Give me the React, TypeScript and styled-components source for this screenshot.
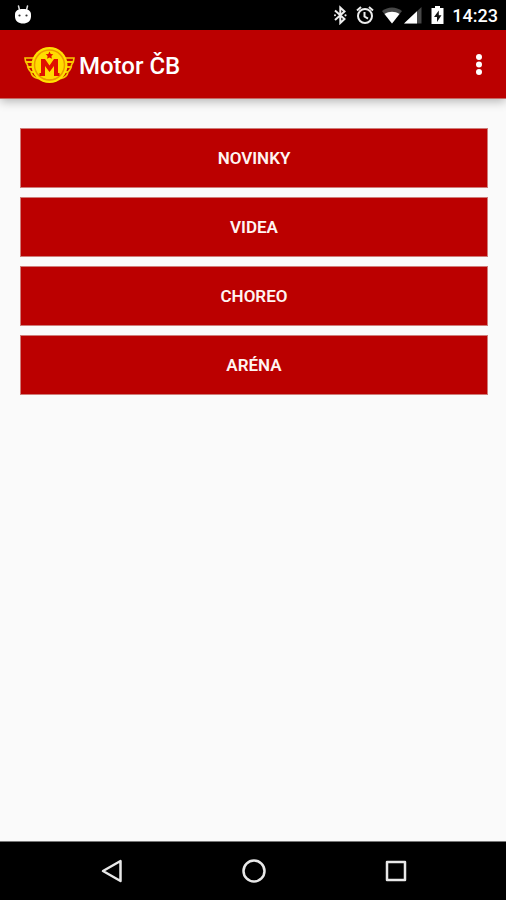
import React from "react";
import styled, { createGlobalStyle } from "styled-components";

const GlobalStyle = createGlobalStyle`
  * { box-sizing: border-box; }
  body {
    margin: 0;
    background: #fafafa;
    font-family: Roboto, "Noto Sans", sans-serif;
  }
`;

const Screen = styled.div`
  display: flex;
  flex-direction: column;
  min-height: 100vh;
  background: #fafafa;
`;

const StatusBar = styled.div`
  display: flex;
  align-items: center;
  justify-content: space-between;
  height: 30px;
  padding: 0 8px 0 14px;
  background: #000;
  color: #fff;
`;

const StatusGroup = styled.div<{ $gap: number }>`
  display: flex;
  align-items: center;
  gap: ${({ $gap }) => $gap}px;
`;

const Clock = styled.time`
  padding-top: 2px;
  font-size: 18px;
  font-weight: 500;
  line-height: 24px;
`;

const Glyph = styled.svg`
  display: block;
  flex: none;
`;

const AppBar = styled.header`
  display: flex;
  align-items: center;
  height: 69px;
  padding: 2px 10px 0 24px;
  background: #bb0000;
  color: #fff;
  border-bottom: 1px solid #c46a66;
  box-shadow: 0 2px 10px rgba(0, 0, 0, 0.3);
`;

const Title = styled.h1`
  flex: 1;
  margin: 0;
  padding: 2px 0 0 3px;
  font-size: 24px;
  font-weight: 500;
  line-height: 32px;
`;

const IconButton = styled.button`
  display: flex;
  align-items: center;
  justify-content: center;
  height: 48px;
  min-width: 34px;
  padding: 0;
  border: 0;
  background: none;
  color: inherit;
  cursor: pointer;
`;

const Menu = styled.main`
  flex: 1;
  display: flex;
  flex-direction: column;
  gap: 9px;
  padding: 29px 18px 28px 20px;
`;

const MenuButton = styled.button`
  height: 60px;
  padding: 0;
  border: 1px solid #cf7d7a;
  background: #bb0000;
  color: #fff4f2;
  font-family: inherit;
  font-size: 17px;
  font-weight: 600;
  line-height: 24px;
  cursor: pointer;
`;

const NavBar = styled.nav`
  display: grid;
  grid-template-columns: repeat(3, 1fr);
  align-items: center;
  height: 59px;
  padding: 0 39px 0 41px;
  border-top: 1px solid #777;
  background: #000;
  color: #e8e8e8;
`;

const AndroidHead = () => (
  <Glyph width="18" height="20" viewBox="0 0 18 20">
    <path d="M4.500 1 5.500 5M13.500 1 12.500 5" stroke="#ddd" strokeWidth="1.500" strokeLinecap="round" />
    <path d="M1 9.500C1 5.800 4 4 9 4s8 1.800 8 5.500v2C17 16 13.500 18.500 9 18.500S1 16 1 11.500Z" fill="#fff" />
    <circle cx="5.500" cy="10.500" r="1.100" fill="#333" />
    <circle cx="12.500" cy="10.500" r="1.100" fill="#333" />
  </Glyph>
);

const BluetoothIcon = () => (
  <Glyph width="14" height="20" viewBox="0 0 14 20" fill="none" stroke="#eee" strokeWidth="2">
    <path d="M1 5.500 10.500 14 6.300 18V2.500L10.500 6.500 1 15" />
    <circle cx="1" cy="10.300" r="1" fill="#eee" stroke="none" />
    <circle cx="11.500" cy="10.300" r="1.100" fill="#eee" stroke="none" />
  </Glyph>
);

const AlarmIcon = () => (
  <Glyph width="18" height="20" viewBox="0 0 18 20" fill="none" stroke="#eee" strokeWidth="2">
    <circle cx="9" cy="11" r="7" />
    <path d="M1 5.500 5 2M17 5.500 13 2M8.500 7v4.500l3.500 2.200" />
  </Glyph>
);

const WifiIcon = () => (
  <Glyph width="20" height="20" viewBox="0 0 20 20">
    <path d="M0 6C6 1.300 14 1.300 20 6L10 18.500Z" fill="#484848" />
    <path d="M2.500 9C7 6 13 6 17.500 9L10 18.500Z" fill="#fff" />
  </Glyph>
);

const SignalIcon = () => (
  <Glyph width="18" height="20" viewBox="0 0 18 20">
    <path d="M0 18.500 17.500 2v16.500Z" fill="#484848" />
    <path d="M0 18.500 13 6.200v12.300Z" fill="#fff" />
  </Glyph>
);

const BatteryIcon = () => (
  <Glyph width="14" height="20" viewBox="0 0 14 20">
    <path d="M5 1h5v2h3.500v16h-12V3H5Z" fill="#fff" />
    <path d="M8.800 5.500 4 12h3v5l4.500-6.800H8.800Z" fill="#111" />
  </Glyph>
);

const Wing = () => (
  <>
    <path d="M1 12H14V32.500C10 31.500 7.500 29 7 26 5 24 3.500 21.500 3.500 19 2 17 1 14.500 1 12Z" fill="#c40800" stroke="#f8c800" strokeWidth="1.600" />
    <path d="M2 16H12M4 21H12M7 26H13" stroke="#f8c800" strokeWidth="2.200" />
  </>
);

const Logo = () => (
  <Glyph width="52" height="38" viewBox="0 0 52 38" role="img" aria-label="Motor ČB">
    <Wing />
    <g transform="translate(51) scale(-1 1)">
      <Wing />
    </g>
    <circle cx="25.500" cy="19" r="18" fill="#ffe000" />
    <circle cx="25.500" cy="19" r="15" fill="#ffdc00" stroke="#ee9800" strokeWidth="1.500" />
    <path d="m25.500 5.500 1.200 2.400 2.600.3-1.900 1.800.5 2.700-2.400-1.300-2.400 1.300.5-2.700-1.900-1.800 2.600-.3Z" fill="#e01000" />
    <path d="M17 13H21L25.500 19.500 30 13H34V27H35.500V30H30V20L25.500 26 21 20V30H15.500V27H17Z" fill="#e01000" />
    <path d="M19 32.500c4 1.800 9 1.800 13 0" fill="none" stroke="#ee9800" strokeWidth="1" />
  </Glyph>
);

const items = ["NOVINKY", "VIDEA", "CHOREO", "ARÉNA"];

export default function App() {
  return (
    <>
      <GlobalStyle />
      <Screen>
        <StatusBar>
          <AndroidHead />
          <StatusGroup $gap={8}>
            <BluetoothIcon />
            <AlarmIcon />
            <StatusGroup $gap={2}>
              <WifiIcon />
              <SignalIcon />
            </StatusGroup>
            <BatteryIcon />
            <Clock>14:23</Clock>
          </StatusGroup>
        </StatusBar>
        <AppBar>
          <Logo />
          <Title>Motor ČB</Title>
          <IconButton type="button" aria-label="Další možnosti">
            <Glyph width="8" height="22" viewBox="0 0 8 22" fill="#fff">
              <circle cx="4" cy="3" r="3" />
              <circle cx="4" cy="10.500" r="3" />
              <circle cx="4" cy="18" r="3" />
            </Glyph>
          </IconButton>
        </AppBar>
        <Menu>
          {items.map((label) => (
            <MenuButton key={label} type="button">
              {label}
            </MenuButton>
          ))}
        </Menu>
        <NavBar>
          <IconButton type="button" aria-label="Zpět">
            <Glyph width="24" height="24" viewBox="0 0 24 24" fill="none" stroke="currentColor" strokeWidth="2.500" strokeLinejoin="round">
              <path d="M3 12 20.500 2v20Z" />
            </Glyph>
          </IconButton>
          <IconButton type="button" aria-label="Domů">
            <Glyph width="24" height="24" viewBox="0 0 24 24" fill="none" stroke="currentColor" strokeWidth="2.500">
              <circle cx="12" cy="12" r="10.500" />
            </Glyph>
          </IconButton>
          <IconButton type="button" aria-label="Přehled">
            <Glyph width="24" height="24" viewBox="0 0 24 24" fill="none" stroke="currentColor" strokeWidth="2.500" strokeLinejoin="round">
              <path d="M3 3h18v18H3Z" />
            </Glyph>
          </IconButton>
        </NavBar>
      </Screen>
    </>
  );
}
